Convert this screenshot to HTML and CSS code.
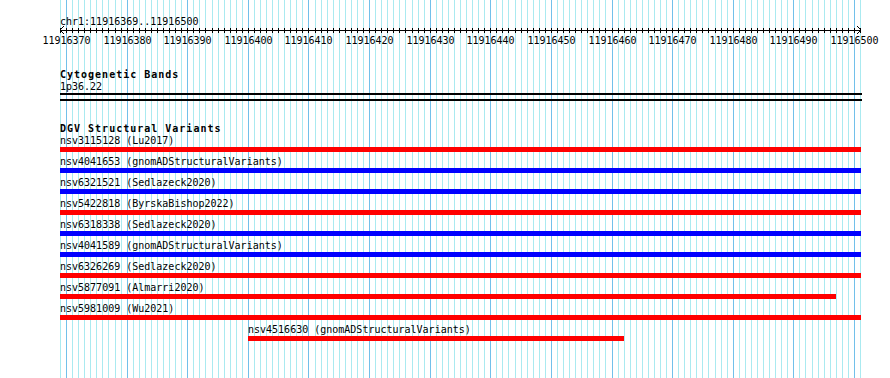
FILE: index.html
```html
<!DOCTYPE html>
<html lang="en">
<head>
  <meta charset="UTF-8">
  <title>chr1:11916369..11916500</title>
  <link rel="stylesheet" href="styles.css">
</head>
<body>
  <div class="browser">
    <svg class="guides" id="guides" width="890" height="378"></svg>

    <div class="track ruler">
      <div class="pos">chr1:11916369..11916500</div>
      <svg class="axis" id="axis" width="890" height="23"></svg>
    </div>

    <div class="track cyto">
      <div class="track-title">Cytogenetic Bands</div>
      <div class="band-name">1p36.22</div>
      <div class="band-rule"></div>
      <div class="band-rule second"></div>
    </div>

    <div class="track dgv">
      <div class="track-title">DGV Structural Variants</div>
      <div class="features">
        <div class="feature">
          <div class="feature-label">nsv3115128 (Lu2017)</div>
          <div class="feature-bar loss" style="width:801px"></div>
        </div>
        <div class="feature">
          <div class="feature-label">nsv4041653 (gnomADStructuralVariants)</div>
          <div class="feature-bar gain" style="width:801px"></div>
        </div>
        <div class="feature">
          <div class="feature-label">nsv6321521 (Sedlazeck2020)</div>
          <div class="feature-bar gain" style="width:801px"></div>
        </div>
        <div class="feature">
          <div class="feature-label">nsv5422818 (ByrskaBishop2022)</div>
          <div class="feature-bar loss" style="width:801px"></div>
        </div>
        <div class="feature">
          <div class="feature-label">nsv6318338 (Sedlazeck2020)</div>
          <div class="feature-bar gain" style="width:801px"></div>
        </div>
        <div class="feature">
          <div class="feature-label">nsv4041589 (gnomADStructuralVariants)</div>
          <div class="feature-bar gain" style="width:801px"></div>
        </div>
        <div class="feature">
          <div class="feature-label">nsv6326269 (Sedlazeck2020)</div>
          <div class="feature-bar loss" style="width:801px"></div>
        </div>
        <div class="feature">
          <div class="feature-label">nsv5877091 (Almarri2020)</div>
          <div class="feature-bar loss" style="width:776px"></div>
        </div>
        <div class="feature">
          <div class="feature-label">nsv5981009 (Wu2021)</div>
          <div class="feature-bar loss" style="width:801px"></div>
        </div>
        <div class="feature" style="margin-left:188px">
          <div class="feature-label">nsv4516630 (gnomADStructuralVariants)</div>
          <div class="feature-bar loss" style="width:376px"></div>
        </div>
      </div>
    </div>
  </div>

  <script>
    // window chr1:11916369..11916500, 132 bases over 800px starting at x=60
    const START = 11916369;
    const BASES = 132;
    const NS = 'http://www.w3.org/2000/svg';

    function baseX(i) {
      return 60 + Math.round(i * 800 / BASES);
    }

    function add(parent, tag, attrs, text) {
      const el = document.createElementNS(NS, tag);
      for (const key in attrs) el.setAttribute(key, attrs[key]);
      if (text) el.textContent = text;
      parent.appendChild(el);
      return el;
    }

    const guides = document.getElementById('guides');
    const axis = document.getElementById('axis');

    for (let i = 0; i <= BASES; i++) {
      const x = baseX(i);
      const major = (START + i) % 10 === 0;
      add(guides, 'rect', { x: x, y: 0, width: 1, height: 378, class: major ? 'guide major' : 'guide' });
      add(axis, 'rect', { x: x, y: 1, width: 1, height: 5, class: 'tick' });
      if (major) {
        add(axis, 'text', { x: x + 0.5, y: 17, class: 'tick-label' }, String(START + i));
      }
    }

    add(axis, 'rect', { x: 60, y: 3, width: 801, height: 1, class: 'tick' });
    add(axis, 'path', { d: 'M64 -1 L60 3 L64 7', class: 'arrow' });
    add(axis, 'path', { d: 'M857 -1 L861 3 L857 7', class: 'arrow' });
  </script>
</body>
</html>
```

FILE: styles.css
```css
* { box-sizing: border-box; }
body {
  margin: 0;
  background: #fff;
}
.browser {
  position: relative;
  width: 890px;
  height: 378px;
  overflow: hidden;
  background: #fff;
  color: #000;
  font-family: "DejaVu Sans Mono", "Liberation Mono", monospace;
  font-size: 10px;
  line-height: 11px;
}
.guides {
  position: absolute;
  left: 0;
  top: 0;
  z-index: 0;
}
.guide {
  fill: #aaeaf0;
}
.guide.major {
  fill: #72c0ea;
}
.track {
  position: relative;
  z-index: 1;
  padding-left: 60px;
}
.track-title {
  font-weight: bold;
  letter-spacing: 1px;
}

/* ruler */
.ruler {
  padding-left: 0;
  padding-top: 16px;
}
.pos {
  padding-left: 60px;
  height: 11px;
}
.axis {
  display: block;
  overflow: visible;
}
.tick {
  fill: #000;
}
.arrow {
  fill: none;
  stroke: #000;
  stroke-width: 1;
}
.tick-label {
  font-family: "DejaVu Sans Mono", "Liberation Mono", monospace;
  font-size: 10px;
  text-anchor: middle;
  fill: #000;
}

/* cytoband */
.cyto {
  margin-top: 19px;
}
.band-name {
  margin-top: 1px;
}
.band-rule {
  width: 802px;
  height: 2px;
  margin-top: 1px;
  background: #000;
}
.band-rule.second {
  margin-top: 4px;
}

/* DGV */
.dgv {
  margin-top: 22px;
}
.features {
  margin-top: 1px;
}
.feature {
  height: 21px;
}
.feature-label {
  height: 11px;
  white-space: nowrap;
}
.feature-bar {
  height: 5px;
  margin-top: 1px;
}
.feature-bar.loss {
  background: #ff0000;
}
.feature-bar.gain {
  background: #0000ff;
}
```
